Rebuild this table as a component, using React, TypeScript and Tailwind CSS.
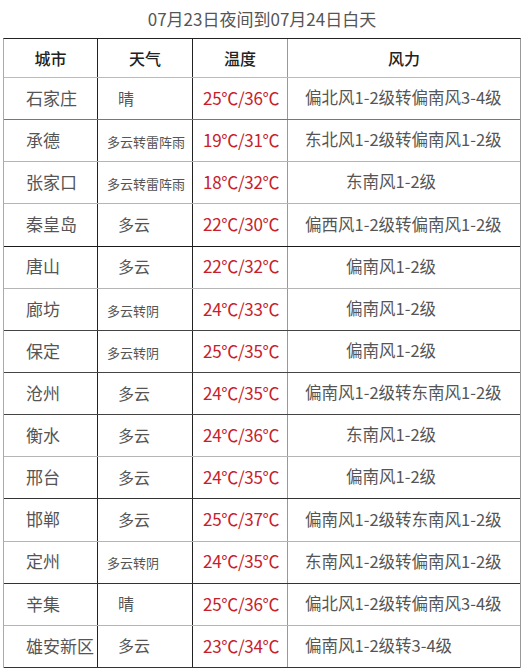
const font = "font-['Noto_Sans_CJK_SC','Noto_Sans',sans-serif]";

type Row = {
  city: string;
  weather: string;
  small?: boolean;
  temp: string;
  wind: string;
  short?: boolean;
  line: string;
};

const rows: Row[] = [
  { city: "石家庄", weather: "晴", temp: "25℃/36℃", wind: "偏北风1-2级转偏南风3-4级", line: "border-b-[#777]" },
  { city: "承德", weather: "多云转雷阵雨", small: true, temp: "19℃/31℃", wind: "东北风1-2级转偏南风1-2级", line: "border-b-[#b5b5b5]" },
  { city: "张家口", weather: "多云转雷阵雨", small: true, temp: "18℃/32℃", wind: "东南风1-2级", short: true, line: "border-b-[#b5b5b5]" },
  { city: "秦皇岛", weather: "多云", temp: "22℃/30℃", wind: "偏西风1-2级转偏南风1-2级", line: "border-b-[#1a1a1a]" },
  { city: "唐山", weather: "多云", temp: "22℃/32℃", wind: "偏南风1-2级", short: true, line: "border-b-[#b5b5b5]" },
  { city: "廊坊", weather: "多云转阴", small: true, temp: "24℃/33℃", wind: "偏南风1-2级", short: true, line: "border-b-[#444]" },
  { city: "保定", weather: "多云转阴", small: true, temp: "25℃/35℃", wind: "偏南风1-2级", short: true, line: "border-b-[#444]" },
  { city: "沧州", weather: "多云", temp: "24℃/35℃", wind: "偏南风1-2级转东南风1-2级", line: "border-b-[#444]" },
  { city: "衡水", weather: "多云", temp: "24℃/36℃", wind: "东南风1-2级", short: true, line: "border-b-[#b5b5b5]" },
  { city: "邢台", weather: "多云", temp: "24℃/35℃", wind: "偏南风1-2级", short: true, line: "border-b-[#333]" },
  { city: "邯郸", weather: "多云", temp: "25℃/37℃", wind: "偏南风1-2级转东南风1-2级", line: "border-b-[#b5b5b5]" },
  { city: "定州", weather: "多云转阴", small: true, temp: "24℃/35℃", wind: "东南风1-2级转偏南风1-2级", line: "border-b-[#333]" },
  { city: "辛集", weather: "晴", temp: "25℃/36℃", wind: "偏北风1-2级转偏南风3-4级", line: "border-b-[#b5b5b5]" },
  { city: "雄安新区", weather: "多云", temp: "23℃/34℃", wind: "偏南风1-2级转3-4级", line: "border-b-[#333]" },
];

export default function App() {
  return (
    <div className={`${font} w-[524px] h-[672px] bg-white overflow-hidden`}>
      {/* Title */}
      <div className="h-[38px] flex items-center justify-center text-[17px] text-[#555]">
        07月23日夜间到07月24日白天
      </div>

      {/* Table */}
      <div className="ml-[3px] w-[518px] border-t border-t-[#222] border-l border-l-[#aaa] border-r border-r-[#999]">
        <div className="grid grid-cols-[94px_95px_95px_1fr] h-[39px] border-b border-b-[#bbb] text-[16px] text-[#222] font-medium">
          <div className="flex items-center justify-center border-r border-r-[#222]">城市</div>
          <div className="flex items-center justify-center border-r border-r-[#222]">天气</div>
          <div className="flex items-center justify-center border-r border-r-[#999]">温度</div>
          <div className="flex items-center justify-center">风力</div>
        </div>

        {rows.map((r) => (
          <div
            key={r.city}
            className={`grid grid-cols-[94px_95px_95px_1fr] h-[42.15px] border-b ${r.line}`}
          >
            <div className="flex items-center pl-[22px] pb-[2px] border-r border-r-[#222] text-[17px] text-[#555]">
              {r.city}
            </div>
            <div
              className={
                r.small
                  ? "flex items-center pl-[9px] pt-[2px] border-r border-r-[#222] text-[13px] text-[#555]"
                  : "flex items-center pl-[20px] pb-[2px] border-r border-r-[#222] text-[16px] text-[#555]"
              }
            >
              {r.weather}
            </div>
            <div className="flex items-center pl-[10px] pb-[2px] border-r border-r-[#999] text-[17px] text-[#c8202a] tracking-[-0.3px]">
              {r.temp}
            </div>
            <div
              className={
                r.short
                  ? "flex items-center pl-[58px] pb-[2px] text-[16.5px] text-[#555]"
                  : "flex items-center pl-[17px] pb-[2px] text-[16.5px] text-[#555]"
              }
            >
              {r.wind}
            </div>
          </div>
        ))}
      </div>
    </div>
  );
}
